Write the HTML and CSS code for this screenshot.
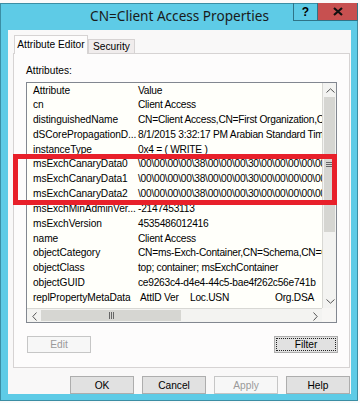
FILE: index.html
```html
<!DOCTYPE html>
<html lang="en">
<head>
  <meta charset="UTF-8" />
  <meta name="viewport" content="width=device-width, initial-scale=1" />
  <title>CN=Client Access Properties</title>
  <link rel="stylesheet" href="styles.css">
</head>
<body>
  <div class="window">
    <div class="titlebar">
      <span class="title">CN=Client Access Properties</span>
      <span class="cap help">?</span>
      <span class="cap close">
        <svg width="10" height="9" viewBox="0 0 10 9"><path d="M1 1 L9 8 M9 1 L1 8" stroke="#111" stroke-width="2.2" fill="none"/></svg>
      </span>
    </div>
    <div class="client">
      <div class="tabs">
        <div class="tab active">Attribute Editor</div>
        <div class="tab">Security</div>
      </div>
      <div class="panel">
        <div class="caption">Attributes:</div>
        <div class="listview">
          <div class="list-body">
            <div class="list-header">
              <span class="attr">Attribute</span><span class="val">Value</span>
            </div>
            <div class="row"><span class="attr">cn</span><span class="val">Client Access</span></div>
            <div class="row"><span class="attr">distinguishedName</span><span class="val">CN=Client Access,CN=First Organization,CN=Microsoft Exchange</span></div>
            <div class="row"><span class="attr">dSCorePropagationD...</span><span class="val">8/1/2015 3:32:17 PM Arabian Standard Time</span></div>
            <div class="row"><span class="attr">instanceType</span><span class="val">0x4 = ( WRITE )</span></div>
            <div class="row"><span class="attr">msExchCanaryData0</span><span class="val">\00\00\00\00\38\00\00\00\30\00\00\00\00\00</span></div>
            <div class="row"><span class="attr">msExchCanaryData1</span><span class="val">\00\00\00\00\38\00\00\00\30\00\00\00\00\00</span></div>
            <div class="row"><span class="attr">msExchCanaryData2</span><span class="val">\00\00\00\00\38\00\00\00\30\00\00\00\00\00</span></div>
            <div class="row"><span class="attr">msExchMinAdminVer...</span><span class="val">-2147453113</span></div>
            <div class="row"><span class="attr">msExchVersion</span><span class="val">4535486012416</span></div>
            <div class="row"><span class="attr">name</span><span class="val">Client Access</span></div>
            <div class="row"><span class="attr">objectCategory</span><span class="val">CN=ms-Exch-Container,CN=Schema,CN=Configuration</span></div>
            <div class="row"><span class="attr">objectClass</span><span class="val">top; container; msExchContainer</span></div>
            <div class="row"><span class="attr">objectGUID</span><span class="val">ce9263c4-d4e4-44c5-bae4f262c56e741b</span></div>
            <div class="row"><span class="attr">replPropertyMetaData</span><span class="val meta"><span class="m1">AttID</span><span class="m2">Ver</span><span class="m3">Loc.USN</span><span>Org.DSA</span></span></div>
            <div class="row"><span class="attr">showInAdvancedVie...</span><span class="val">TRUE</span></div>
          </div>
          <div class="vscroll">
            <span class="arrow"><svg width="9" height="5" viewBox="0 0 9 5"><path d="M0.5 4.5 L4.5 0.8 L8.5 4.5" stroke="#555" fill="none"/></svg></span>
            <span class="vthumb"><span class="grip-h"></span></span>
            <span class="vtrack"></span>
            <span class="arrow"><svg width="9" height="5" viewBox="0 0 9 5"><path d="M0.5 0.5 L4.5 4.2 L8.5 0.5" stroke="#555" fill="none"/></svg></span>
          </div>
          <div class="hscroll">
            <span class="arrow"><svg width="5" height="9" viewBox="0 0 5 9"><path d="M4.5 0.5 L0.8 4.5 L4.5 8.5" stroke="#555" fill="none"/></svg></span>
            <span class="hthumb"><span class="grip-v"></span></span>
            <span class="htrack"></span>
            <span class="arrow"><svg width="5" height="9" viewBox="0 0 5 9"><path d="M0.5 0.5 L4.2 4.5 L0.5 8.5" stroke="#555" fill="none"/></svg></span>
          </div>
          <div class="corner"></div>
        </div>
        <div class="panel-buttons">
          <button class="btn" disabled>Edit</button>
          <button class="btn focused">Filter</button>
        </div>
      </div>
      <div class="dialog-buttons">
        <button class="btn">OK</button>
        <button class="btn">Cancel</button>
        <button class="btn" disabled>Apply</button>
        <button class="btn">Help</button>
      </div>
    </div>
  </div>
  <div class="highlight"></div>
</body>
</html>
```

FILE: styles.css
```css
body {
  margin: 0;
  width: 360px;
  height: 403px;
  overflow: hidden;
  background: #fafafa;
  font-family: "Liberation Sans", Arial, sans-serif;
  font-size: 10.2px;
  color: #000;
}
.window {
  margin-top: 3px;
  width: 358px;
  height: 398px;
  box-sizing: border-box;
  border: 1px solid #3b8ea4;
  background: #5ecbe6;
  display: flex;
  flex-direction: column;
}
.titlebar {
  height: 26px;
  display: flex;
  align-items: flex-start;
}
.title {
  flex: 1;
  padding-left: 65px;
  text-align: center;
  font-family: "Noto Sans", sans-serif;
  font-size: 13.6px;
  line-height: 24px;
  color: #1a1a1a;
}
.cap {
  margin-top: -1px;
  height: 18px;
  box-sizing: border-box;
  border: 1px solid #2f7487;
  border-top: none;
  display: flex;
  align-items: center;
  justify-content: center;
  font-weight: bold;
  font-size: 12px;
}
.help {
  width: 24px;
  border-right: none;
}
.close {
  width: 41px;
  margin-right: -1px;
  background: #c75050;
}
.client {
  flex: 1;
  margin: 0 6px 6px 7px;
  background: #f9f8f8;
  display: flex;
  flex-direction: column;
}
.tabs {
  height: 17px;
  margin-top: 6px;
  padding-left: 6px;
  display: flex;
  align-items: flex-end;
}
.tab {
  height: 13px;
  padding: 0 4px;
  border: 1px solid #d6d3d3;
  border-bottom: none;
  background: #f0ecec;
  line-height: 13px;
}
.tab.active {
  position: relative;
  z-index: 1;
  height: 18px;
  width: 72px;
  padding: 0;
  margin-bottom: -1px;
  text-align: center;
  line-height: 18px;
  background: #fdfcfc;
}
.panel {
  height: 315px;
  box-sizing: border-box;
  margin: 0 1px 0 5px;
  border: 1px solid #d6d3d3;
  background: #fdfcfc;
}
.caption {
  margin: 10px 0 4px 12px;
  line-height: 14px;
}
.listview {
  margin: 0 12px;
  height: 241px;
  box-sizing: border-box;
  border: 1px solid #828790;
  background: #fffffa;
  display: grid;
  grid-template-columns: 1fr 14px;
  grid-template-rows: 1fr 14px;
}
.list-body {
  overflow: hidden;
  min-width: 0;
}
.list-header {
  height: 15px;
  display: flex;
  line-height: 15px;
}
.row {
  height: 14.85px;
  display: flex;
  line-height: 14.85px;
  white-space: nowrap;
}
.attr {
  flex: none;
  width: 105px;
  padding-left: 6px;
  overflow: hidden;
  letter-spacing: -0.1px;
}
.val {
  flex: none;
  letter-spacing: -0.25px;
}
.meta {
  padding-left: 2px;
}
.m1 {
  display: inline-block;
  width: 24px;
}
.m2 {
  display: inline-block;
  width: 26px;
}
.m3 {
  display: inline-block;
  width: 85px;
}
.vscroll {
  grid-row: 1;
  grid-column: 2;
  display: flex;
  flex-direction: column;
  background: #f3f3f1;
  border-left: 1px solid #d8d8d4;
}
.hscroll {
  grid-row: 2;
  grid-column: 1;
  display: flex;
  background: #f3f3f1;
  border-top: 1px solid #d8d8d4;
}
.corner {
  background: #f7f6f4;
}
.arrow {
  flex: none;
  width: 14px;
  height: 14px;
  display: flex;
  align-items: center;
  justify-content: center;
}
.vthumb {
  height: 135px;
  margin: 0 1px;
  background: #d6d6d2;
  display: flex;
  align-items: center;
  justify-content: center;
}
.vtrack,
.htrack {
  flex: 1;
}
.hthumb {
  width: 140px;
  margin: 1px 0;
  background: #d6d6d2;
  display: flex;
  align-items: center;
  justify-content: center;
}
.grip-h {
  width: 7px;
  height: 5px;
  border-top: 1px solid #666;
  border-bottom: 1px solid #666;
  box-sizing: border-box;
  background: linear-gradient(#666, #666) center / 100% 1px no-repeat;
}
.grip-v {
  width: 5px;
  height: 7px;
  border-left: 1px solid #666;
  border-right: 1px solid #666;
  box-sizing: border-box;
  background: linear-gradient(#666, #666) center / 1px 100% no-repeat;
}
.panel-buttons {
  margin-top: 13px;
  padding: 0 11px 0 13px;
  display: flex;
  justify-content: space-between;
}
.btn {
  width: 64px;
  height: 17px;
  padding: 0;
  border: 1px solid #adadad;
  border-radius: 0;
  background: #e1e1e1;
  font-family: inherit;
  font-size: 10.2px;
  color: #000;
}
.btn:disabled {
  background: #f7f7f7;
  border-color: #c6c6c6;
  color: #9a9a9a;
}
.btn.focused {
  outline: 1px dotted #222;
  outline-offset: -3px;
}
.dialog-buttons {
  margin-top: 8px;
  padding-right: 1px;
  display: flex;
  justify-content: flex-end;
  gap: 8px;
}
.dialog-buttons .btn {
  height: 18px;
}
.highlight {
  position: absolute;
  left: 13px;
  top: 154px;
  width: 324px;
  height: 51px;
  box-sizing: border-box;
  border: 5px solid #e8202a;
}
```
